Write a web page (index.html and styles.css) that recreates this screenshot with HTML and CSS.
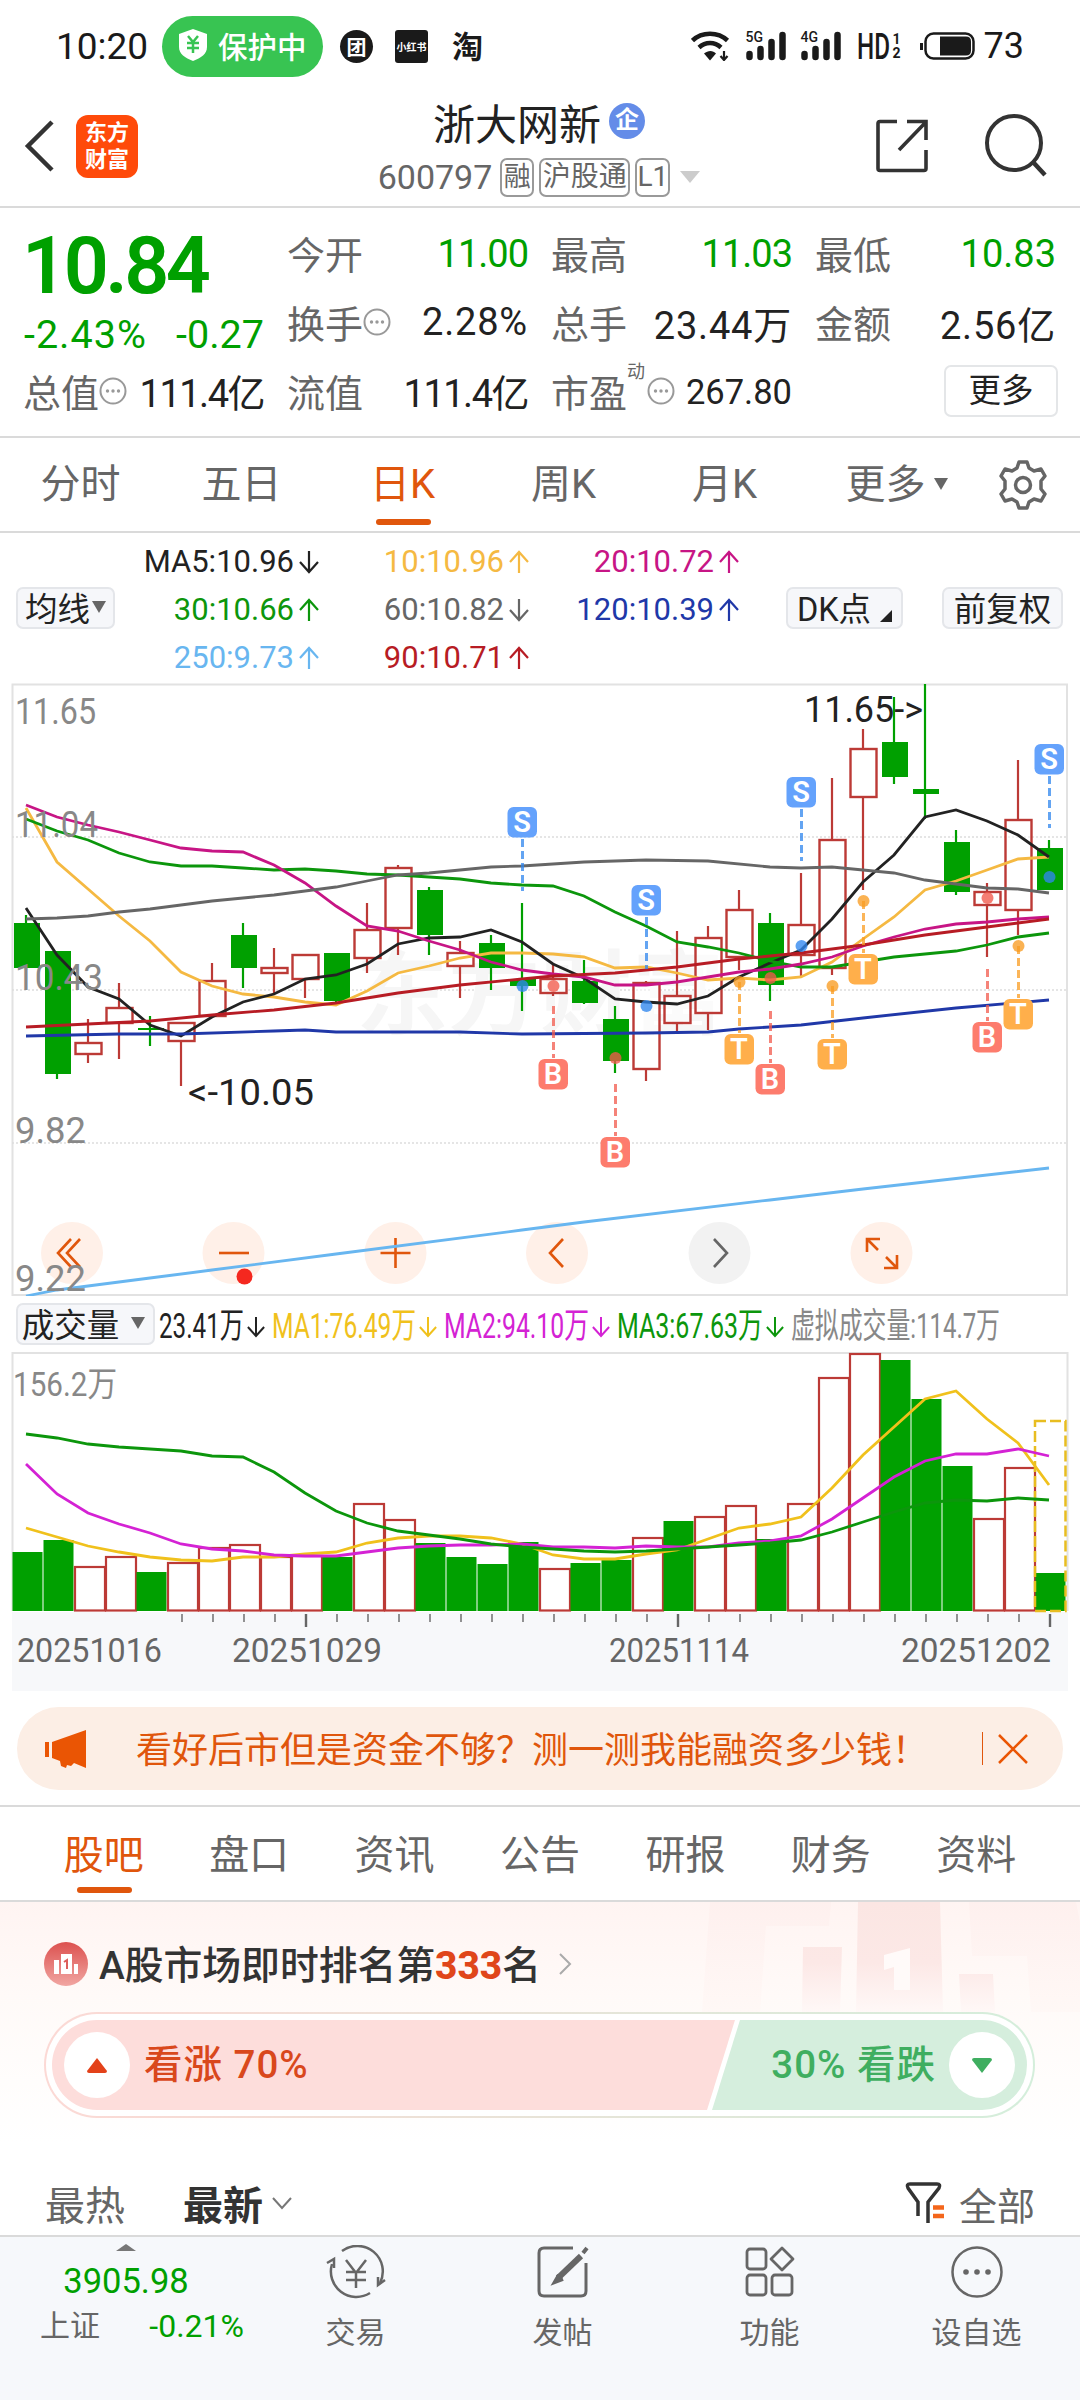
FILE: index.html
```html
<!DOCTYPE html>
<html lang="zh-CN">
<head>
<meta charset="utf-8">
<title>浙大网新 600797</title>
<link rel="stylesheet" href="styles.css">
</head>
<body>

<svg class="defs" width="0" height="0">
  <symbol id="up" viewBox="0 0 20 24"><path d="M10 23V2M1 12L10 2l9 10" fill="none" stroke="currentColor" stroke-width="2.2"/></symbol>
  <symbol id="down" viewBox="0 0 20 24"><path d="M10 1v21M1 12l9 10 9-10" fill="none" stroke="currentColor" stroke-width="2.2"/></symbol>
  <symbol id="info" viewBox="0 0 28 28"><circle cx="14" cy="14" r="12.5" fill="none" stroke="#999" stroke-width="2"/><g fill="#999"><circle cx="8.5" cy="14" r="1.7"/><circle cx="14" cy="14" r="1.7"/><circle cx="19.5" cy="14" r="1.7"/></g></symbol>
  <symbol id="bars" viewBox="0 0 40 30"><g stroke="#1a1a1a" stroke-width="6.5" stroke-linecap="round"><path d="M3.5 23v3M14.5 18v8M25.5 11v15M36.5 4v22"/></g></symbol>
</svg>

<div class="status">
  <span class="time">10:20</span>
  <span class="protect">
    <svg width="28" height="32" viewBox="0 0 28 32"><path d="M14 0l14 5v13c0 7-6 11-14 14C6 29 0 25 0 18V5z" fill="#fff"/><path d="M9 7l5 6 5-6M14 13v11M8 14h12M8 19h12" fill="none" stroke="#38c452" stroke-width="2.5"/></svg>
    保护中
  </span>
  <span class="app round"><b>团</b></span>
  <span class="app square">小红书</span>
  <span class="app tao">淘</span>
  <div class="status-right">
    <svg class="wifi" width="40" height="30" viewBox="0 0 40 30"><g fill="none" stroke="#1a1a1a" stroke-width="4.5"><path d="M1.5 9.5C11 .5 27 .5 36.5 9.5"/><path d="M8 16.5c6.5-6 15.5-6 22 0"/></g><path d="M13 22.5c4-3.5 9-3.5 12 0l-6 7z" fill="#1a1a1a"/><path d="M33 20v9M29.5 25l3.5 4 3.5-4" fill="none" stroke="#1a1a1a" stroke-width="2.2"/></svg>
    <span class="net"><i>5G</i><svg width="40" height="30"><use href="#bars"/></svg></span>
    <span class="net"><i>4G</i><svg width="40" height="30"><use href="#bars"/></svg></span>
    <svg class="hd" width="33" height="30"><text x="0" y="28" font-size="36" font-weight="500" textLength="33" lengthAdjust="spacingAndGlyphs" fill="#1a1a1a">HD</text></svg>
    <span class="sim"><i>1</i><i>2</i></span>
    <svg class="battery" width="55" height="30" viewBox="0 0 55 30"><rect x="5.5" y="2.5" width="48" height="25" rx="8" fill="none" stroke="#1a1a1a" stroke-width="2.5"/><path d="M1.5 12v7" stroke="#1a1a1a" stroke-width="3"/><path d="M20 5.5h26q5 0 5 5v9q0 5-5 5H20z" fill="#1a1a1a"/></svg>
    <span class="level">73</span>
  </div>
</div>

<div class="header">
  <svg class="back" width="32" height="52" viewBox="0 0 32 52"><path d="M29 2L5 26l24 24" fill="none" stroke="#333" stroke-width="4.5"/></svg>
  <div class="logo">东方<br>财富</div>
  <div class="stock">
    <div class="name">浙大网新<span class="badge">企</span></div>
    <div class="code">600797<span class="tag narrow">融</span><span class="tag">沪股通</span><span class="tag level1">L1</span><i class="tri"></i></div>
  </div>
  <svg class="share" width="52" height="54" viewBox="0 0 52 54"><path d="M21 2.5H4q-2 0-2 2v45q0 2 2 2h44q2 0 2-2V31M31 2.5h19V21M23 31L49 4" fill="none" stroke="#333" stroke-width="3.6"/></svg>
  <svg class="search" width="66" height="66" viewBox="0 0 66 66"><circle cx="31" cy="30" r="27" fill="none" stroke="#333" stroke-width="4"/><path d="M50 49l12 13" stroke="#333" stroke-width="4.5"/></svg>
</div>

<div class="quote">
  <div class="price-box">
    <div class="price">10.84</div>
    <div class="change"><span>-2.43%</span><span>-0.27</span></div>
  </div>
  <div class="cell"><label>今开</label><span class="green one">11.00</span></div>
  <div class="cell"><label>最高</label><span class="green one">11.03</span></div>
  <div class="cell"><label>最低</label><span class="green">10.83</span></div>
  <div class="cell"><label>换手<svg class="info"><use href="#info"/></svg></label><span class="wide">2.28%</span></div>
  <div class="cell"><label>总手</label><span class="wide">23.44万</span></div>
  <div class="cell"><label>金额</label><span class="wide">2.56亿</span></div>
  <div class="cell"><label>总值<svg class="info"><use href="#info"/></svg></label><span class="ones">111.4亿</span></div>
  <div class="cell"><label>流值</label><span class="ones">111.4亿</span></div>
  <div class="cell"><label>市盈<sup>动</sup><svg class="info pe"><use href="#info"/></svg></label><span class="small">267.80</span></div>
  <div class="cell end"><button class="more">更多</button></div>
</div>

<div class="periods">
  <span>分时</span>
  <span>五日</span>
  <span class="active">日K</span>
  <span>周K</span>
  <span>月K</span>
  <span class="more-tab">更多<i class="tri"></i></span>
  <svg class="gear" width="50" height="50" viewBox="0 0 50 50"><path d="M21 2h8l2 6 5 3 7-2 4 7-4 5v8l4 5-4 7-7-2-5 3-2 6h-8l-2-6-5-3-7 2-4-7 4-5v-8l-4-5 4-7 7 2 5-3z" fill="none" stroke="#666" stroke-width="3.5" stroke-linejoin="round"/><circle cx="25" cy="25" r="7.5" fill="none" stroke="#666" stroke-width="3.5"/></svg>
</div>

<div class="legend">
  <button class="pill">均线<i class="tri"></i></button>
  <div class="ma">
    <span class="c-dark">MA5:10.96<svg><use href="#down"/></svg></span>
    <span class="c-yellow">10:10.96<svg><use href="#up"/></svg></span>
    <span class="c-pink">20:10.72<svg><use href="#up"/></svg></span>
    <span class="c-green">30:10.66<svg><use href="#up"/></svg></span>
    <span class="c-gray">60:10.82<svg><use href="#down"/></svg></span>
    <span class="c-blue">120:10.39<svg><use href="#up"/></svg></span>
    <span class="c-sky">250:9.73<svg><use href="#up"/></svg></span>
    <span class="c-red">90:10.71<svg><use href="#up"/></svg></span>
  </div>
  <button class="pill dk">DK点<i class="corner"></i></button>
  <button class="pill">前复权</button>
</div>

<svg id="kline" class="chart" width="1080" height="613" viewBox="0 683 1080 613"></svg>

<div class="vol-head">
  <button class="pill">成交量<i class="tri"></i></button>
  <svg width="880" height="56" viewBox="158 0 880 56" font-size="35">
    <g fill="#222"><text x="159" y="42" textLength="85" lengthAdjust="spacingAndGlyphs">23.41万</text><use href="#down" x="247" y="19" width="18" height="24"/></g>
    <g fill="#f0c11c" color="#f0c11c"><text x="272" y="42" textLength="144" lengthAdjust="spacingAndGlyphs">MA1:76.49万</text><use href="#down" x="419" y="19" width="18" height="24"/></g>
    <g fill="#d422d4" color="#d422d4"><text x="444" y="42" textLength="145" lengthAdjust="spacingAndGlyphs">MA2:94.10万</text><use href="#down" x="592" y="19" width="18" height="24"/></g>
    <g fill="#0c960c" color="#0c960c"><text x="617" y="42" textLength="146" lengthAdjust="spacingAndGlyphs">MA3:67.63万</text><use href="#down" x="766" y="19" width="18" height="24"/></g>
    <text x="791" y="42" fill="#888" textLength="209" lengthAdjust="spacingAndGlyphs">虚拟成交量:114.7万</text>
  </svg>
</div>

<svg id="volume" class="chart" width="1080" height="339" viewBox="0 1352 1080 339"></svg>

<div class="banner">
  <svg width="44" height="38" viewBox="0 0 44 38"><path d="M1 12h4v15H1zM8 12L42 0v38l-12-5-3 3-4-1-1 3-5-2-1-5-8-3z" fill="#ea5504"/></svg>
  <span>看好后市但是资金不够？测一测我能融资多少钱！</span>
  <i></i>
  <svg class="close" width="30" height="30" viewBox="0 0 30 30"><path d="M1 1l28 28M29 1L1 29" stroke="#ea5504" stroke-width="2.5"/></svg>
</div>

<div class="tabs">
  <span class="active">股吧</span>
  <span>盘口</span>
  <span>资讯</span>
  <span>公告</span>
  <span>研报</span>
  <span>财务</span>
  <span>资料</span>
</div>

<div class="rank">
  <svg class="podium" width="380" height="110" viewBox="0 0 380 110">
    <defs>
      <linearGradient id="fade" x1="0" y1="0" x2="0" y2="110" gradientUnits="userSpaceOnUse"><stop offset="0" stop-color="#fbe6e3"/><stop offset=".55" stop-color="#fce8e6"/><stop offset="1" stop-color="#fff8f7"/></linearGradient>
      <linearGradient id="fade2" x1="0" y1="0" x2="0" y2="110" gradientUnits="userSpaceOnUse"><stop offset="0" stop-color="#fef0ee"/><stop offset="1" stop-color="#fff8f6"/></linearGradient>
    </defs>
    <path d="M10 0h121l-2 24H66l-6 86H2zM269 0h107l4 20v90h-49l-4-56h-55z" fill="url(#fade2)"/>
    <path d="M103 45h39l-2 65h-38zM158 0h82l3 110h-87zM259 72h34l2 38h-34z" fill="url(#fade)"/>
    <path d="M184 53l26-7v42h-16V65l-10 3z" fill="#fffaf9"/>
  </svg>
  <div class="rank-title">
    <svg width="44" height="44" viewBox="0 0 44 44"><defs><linearGradient id="rg" x1="0" y1="0" x2="0" y2="1"><stop offset="0" stop-color="#dc514f"/><stop offset="1" stop-color="#f1a6a2"/></linearGradient></defs><circle cx="22" cy="22" r="22" fill="url(#rg)"/><path d="M10 18h5v14h-5zM17 12h11v20H17zM30 22h4v10h-4z" fill="#fff"/><path d="M20 20l3-2v9" stroke="#dd5f5c" stroke-width="2" fill="none"/></svg>
    <span>A股市场即时排名第<b>333</b>名</span>
    <svg class="go" width="14" height="22" viewBox="0 0 14 22"><path d="M2 1l10 10L2 21" fill="none" stroke="#aaa" stroke-width="2"/></svg>
  </div>
  <div class="vote">
    <div class="rise">
      <span class="knob"><svg width="22" height="17" viewBox="0 0 22 17"><path d="M11 1l10 13q0 2-2 2H3q-2 0-2-2z" fill="#e3421a"/></svg></span>
      看涨 70%
    </div>
    <div class="fall">
      30% 看跌
      <span class="knob"><svg width="22" height="17" viewBox="0 0 22 17"><path d="M11 16L1 3q0-2 2-2h16q2 0 2 2z" fill="#3fae60"/></svg></span>
    </div>
  </div>
</div>

<div class="sort">
  <span>最热</span>
  <span class="active">最新</span>
  <svg width="20" height="13" viewBox="0 0 20 13"><path d="M1 1l9 10 9-10" fill="none" stroke="#777" stroke-width="2"/></svg>
  <svg class="filter" width="40" height="44" viewBox="0 0 40 44"><path d="M13 35V21L3 7Q1 3 5 3h27q4 0 2 4L23 21v21" fill="none" stroke="#333" stroke-width="3.5"/><path d="M28 26.5h11M28 35h11" stroke="#f4661b" stroke-width="4.5"/></svg>
  <span>全部</span>
</div>

<div class="bottom">
  <div class="index">
    <i class="tri up"></i>
    <div class="point">3905.98</div>
    <div class="idx-row"><span>上证</span><span class="green">-0.21%</span></div>
  </div>
  <div class="nav">
    <svg width="60" height="54" viewBox="0 0 60 54" fill="none" stroke="#666" stroke-width="2.5"><path d="M16 6A25.5 25.5 0 0 1 54 38M44 48A25.5 25.5 0 0 1 6 19"/><path d="M1 18l7-4v9M59 35l-7 5v-8"/><path d="M20 15l10 13 10-13M30 28v15M20 27h20M20 35h20"/></svg>
    交易
  </div>
  <div class="nav">
    <svg width="52" height="54" viewBox="0 0 52 54" fill="none" stroke="#666" stroke-width="3"><path d="M36 3H7Q2 3 2 8v38q0 5 5 5h37q5 0 5-5V18"/><path d="M44 11L21 33" stroke-width="6"/><path d="M22 30l-4 7 8-3M46 8l4-5" stroke-width="4"/></svg>
    发帖
  </div>
  <div class="nav">
    <svg width="50" height="54" viewBox="0 0 50 54" fill="none" stroke="#666" stroke-width="2.8"><rect x="2" y="4" width="19" height="20" rx="3"/><rect x="2" y="30" width="19" height="20" rx="3"/><rect x="27" y="30" width="20" height="20" rx="3"/><path d="M37 3l11 11-11 11-11-11z" stroke-linejoin="round"/></svg>
    功能
  </div>
  <div class="nav">
    <svg width="54" height="54" viewBox="0 0 54 54"><circle cx="27" cy="27" r="24.5" fill="none" stroke="#666" stroke-width="2.5"/><g fill="#666"><circle cx="16" cy="27" r="2.8"/><circle cx="27" cy="27" r="2.8"/><circle cx="38" cy="27" r="2.8"/></g></svg>
    设自选
  </div>
</div>

<script src="script.js"></script>
</body>
</html>
```
FILE: styles.css
```css
* {
  box-sizing: border-box;
}
body {
  margin: 0;
  width: 1080px;
  background-color: #fff;
  color: #222;
  font-family: Roboto, "Noto Sans CJK SC", sans-serif;
}
i {
  font-style: normal;
}
svg {
  flex-shrink: 0;
}
.defs {
  display: block;
  height: 0;
}
button {
  font-family: inherit;
  color: #222;
}
.green {
  color: #00a000;
}
.tri {
  display: inline-block;
  border: 7px solid transparent;
  border-top: 12px solid #666;
  border-bottom: 0;
}

/* status bar */
.status {
  display: flex;
  align-items: center;
  height: 90px;
  padding: 2px 56px 0;
  color: #1a1a1a;
}
.time {
  width: 106px;
  font-size: 37px;
}
.protect {
  display: flex;
  align-items: center;
  gap: 11px;
  width: 161px;
  height: 61px;
  padding-left: 17px;
  padding-bottom: 2px;
  border-radius: 31px;
  background-color: #38c452;
  color: #fff;
  font-size: 29.5px;
  font-weight: 500;
}
.app {
  display: flex;
  align-items: center;
  justify-content: center;
  width: 33px;
  height: 33px;
  background-color: #1a1a1a;
  color: #fff;
}
.app.round {
  margin-left: 17px;
  border-radius: 50%;
  font-size: 20px;
}
.app.square {
  margin-left: 22px;
  border-radius: 3px;
  font-size: 10px;
  font-weight: bold;
}
.app.tao {
  margin-left: 23px;
  padding-bottom: 3px;
  background: none;
  color: #1a1a1a;
  font-size: 31px;
  font-weight: bold;
}
.status-right {
  display: flex;
  align-items: center;
  margin-left: auto;
}
.net {
  position: relative;
  height: 30px;
  margin-left: 15px;
}
.net i {
  position: absolute;
  left: 0;
  top: -3px;
  font-size: 14px;
  font-weight: 500;
  line-height: 18px;
}
.hd {
  margin-left: 16px;
}
.sim {
  display: flex;
  flex-direction: column;
  font-size: 14px;
  font-weight: bold;
  line-height: 14px;
  width: 9px;
  margin-left: 3px;
  margin-right: 18px;
}
.level {
  margin-left: 9px;
  font-size: 36px;
}

/* stock title */
.header {
  display: flex;
  align-items: center;
  height: 118px;
  padding: 0 31px 0 23px;
  border-bottom: 2px solid #dadada;
}
.back,
.logo,
.share,
.search {
  margin-bottom: 4px;
}
.logo {
  width: 62px;
  height: 63px;
  margin-left: 21px;
  padding-top: 4px;
  border-radius: 12px;
  background-color: #ff4a0a;
  color: #fff;
  font-size: 22px;
  font-weight: bold;
  line-height: 27px;
  text-align: center;
}
.stock {
  width: 400px;
  margin-left: 201px;
  text-align: center;
}
.name {
  display: flex;
  align-items: center;
  justify-content: center;
  height: 56px;
  padding-top: 2px;
  font-size: 42px;
}
.badge {
  width: 36px;
  height: 36px;
  margin-left: 8px;
  border-radius: 50%;
  background-color: #648ce8;
  color: #fff;
  font-size: 24px;
  font-weight: bold;
  line-height: 34px;
}
.code {
  display: flex;
  align-items: center;
  justify-content: center;
  height: 56px;
  padding-top: 2px;
  color: #666;
  font-size: 34px;
}
.tag {
  width: 91px;
  height: 39px;
  margin-left: 5px;
  border: 2px solid #999;
  border-radius: 7px;
  font-size: 28px;
  line-height: 34px;
}
.tag.narrow {
  width: 34px;
  margin-left: 8px;
  font-size: 27px;
}
.tag.level1 {
  width: 35px;
}
.code .tri {
  margin-left: 10px;
  border-width: 12px 10px 0;
  border-top-color: #ccc;
}
.share {
  margin-left: 137px;
}
.search {
  margin-left: auto;
}

/* quote numbers */
.quote {
  display: grid;
  grid-template-columns: repeat(4, 240px);
  grid-template-rows: repeat(3, 69px);
  column-gap: 24px;
  height: 230px;
  padding: 10px 24px 0;
  border-bottom: 2px solid #dadada;
}
.price-box {
  grid-row: span 2;
  padding-top: 2px;
  color: #00a000;
}
.price {
  margin-left: -2px;
  font-size: 79px;
  font-weight: 600;
  line-height: 92px;
  letter-spacing: -3.5px;
}
.change {
  display: flex;
  justify-content: space-between;
  font-size: 39.5px;
  line-height: 46px;
}
.change span:first-child {
  letter-spacing: 1px;
}
.cell {
  display: flex;
  align-items: center;
  justify-content: space-between;
  font-size: 38px;
  white-space: nowrap;
}
.cell label {
  display: flex;
  align-items: center;
  margin-left: -1px;
  color: #666;
}
.cell span {
  padding-top: 3px;
}
.cell .one {
  letter-spacing: -1px;
}
.cell .ones {
  padding-top: 0;
  letter-spacing: -1.5px;
}
.cell .wide {
  padding-top: 1px;
  letter-spacing: 0.8px;
}
.cell .small {
  font-size: 34.5px;
}
.info {
  width: 28px;
  height: 28px;
}
.cell sup {
  align-self: flex-start;
  font-size: 18px;
  line-height: 18px;
}
.cell .pe {
  margin-left: 2px;
}
.cell.end {
  justify-content: flex-end;
}
.more {
  width: 114px;
  height: 52px;
  margin-right: -2px;
  border: 2px solid #e4e6e8;
  border-radius: 7px;
  background-color: #fff;
  font-size: 32.5px;
  line-height: 46px;
}

/* chart periods */
.periods {
  display: flex;
  align-items: center;
  height: 95px;
  border-bottom: 2px solid #dadada;
  color: #666;
  font-size: 40px;
}
.periods span {
  position: relative;
  width: 161px;
  line-height: 98px;
  text-align: center;
}
.periods .more-tab {
  width: 179px;
  margin-left: 2px;
}
.more-tab .tri {
  margin-left: 8px;
  vertical-align: 8px;
}
.gear {
  margin-left: 12px;
}
.periods .active,
.tabs .active {
  color: #e0560c;
}
.periods .active::after,
.tabs .active::after {
  content: "";
  position: absolute;
  left: 50%;
  bottom: 9px;
  width: 55px;
  height: 6px;
  margin-left: -27px;
  border-radius: 3px;
  background-color: #e0560c;
}

/* moving average legend */
.legend {
  display: flex;
  align-items: center;
  height: 150px;
  padding: 0 16px;
}
.pill {
  display: flex;
  align-items: center;
  justify-content: center;
  width: 121px;
  height: 42px;
  padding: 0 0 3px;
  border: 2px solid #e4e6ea;
  border-radius: 7px;
  background-color: #f6f7fa;
  font-size: 32.5px;
  white-space: nowrap;
}
.legend .pill:first-child {
  width: 99px;
}
.legend .pill .tri {
  margin-left: 2px;
}
.ma {
  display: grid;
  grid-template-columns: 204px 210px 210px;
  grid-auto-rows: 48px;
  width: 624px;
  padding-top: 3px;
  font-size: 31px;
}
.ma span {
  display: flex;
  align-items: center;
  justify-content: flex-end;
}
.ma svg {
  width: 20px;
  height: 24px;
  margin-left: 5px;
}
.legend .dk {
  width: 117px;
  margin-left: 47px;
  margin-right: 39px;
}
.corner {
  align-self: flex-end;
  margin: 0 0 2px 9px;
  border-left: 12px solid transparent;
  border-bottom: 12px solid #222;
}
.c-dark { color: #222; }
.c-yellow { color: #f5b942; }
.c-pink { color: #c71585; }
.c-green { color: #0c960c; }
.c-gray { color: #666; }
.c-blue { color: #2038a8; }
.c-sky { color: #68b6f0; }
.c-red { color: #b71c24; }

.chart {
  display: block;
}
.vol-head {
  display: flex;
  align-items: center;
  height: 56px;
  padding-left: 16px;
}
.vol-head .pill {
  width: 139px;
  margin-right: 3px;
  padding-right: 4px;
}
.vol-head .tri {
  margin-left: 12px;
}

/* financing banner */
.banner {
  display: flex;
  align-items: center;
  width: 1046px;
  height: 83px;
  margin: 16px 17px 15px;
  padding-left: 27px;
  border-radius: 42px;
  background-color: #fceee5;
  color: #e0560c;
  font-size: 36px;
}
.banner span {
  width: 846px;
  padding-left: 48px;
  padding-bottom: 3px;
  white-space: nowrap;
}
.banner i {
  width: 1px;
  height: 33px;
  margin-left: 48px;
  background-color: #e0560c;
}
.banner .close {
  margin-left: 15px;
}

.tabs {
  display: flex;
  height: 97px;
  padding: 0 31px;
  border-top: 2px solid #dadada;
  border-bottom: 2px solid #dadada;
  color: #666;
  font-size: 40px;
}
.tabs span {
  position: relative;
  flex: 1;
  line-height: 97px;
  text-align: center;
}
.tabs .active::after {
  bottom: 7px;
}

/* rank and vote */
.rank {
  position: relative;
  height: 268px;
  padding: 40px 44px 0;
  background: linear-gradient(#fff4f2, #fffaf8 35%, #fff 90%);
}
.podium {
  position: absolute;
  right: 0;
  top: 0;
}
.rank-title {
  position: relative;
  display: flex;
  align-items: center;
  height: 44px;
  font-size: 38.8px;
  font-weight: 500;
  color: #333;
}
.rank-title span {
  margin: 0 17px 0 11px;
  padding-bottom: 4px;
}
.rank-title b {
  color: #e0461a;
  font-weight: 800;
}
.vote {
  position: relative;
  display: flex;
  justify-content: space-between;
  width: 991px;
  height: 106px;
  margin-top: 26px;
  padding: 6px;
  border: 2px solid transparent;
  border-radius: 53px;
  background: linear-gradient(#fff, #fff) padding-box, linear-gradient(90deg, #fcd9d5, #d4eedb) border-box;
  font-size: 38.5px;
  font-weight: 500;
  letter-spacing: 1px;
  line-height: 84px;
}
.rise,
.fall {
  display: flex;
  align-items: center;
  height: 90px;
}
.rise {
  width: 683px;
  padding-left: 12px;
  border-radius: 45px 0 0 45px;
  background-color: #fddddb;
  color: #d9481c;
  clip-path: polygon(0 0, 100% 0, 655px 100%, 0 100%);
  gap: 14px;
}
.fall {
  width: 315px;
  margin-left: -23px;
  padding-right: 12px;
  justify-content: flex-end;
  border-radius: 0 45px 45px 0;
  background-color: #d5eedd;
  color: #3fae60;
  clip-path: polygon(28px 0, 100% 0, 100% 100%, 0 100%);
  gap: 13px;
}
.knob {
  display: flex;
  align-items: center;
  justify-content: center;
  width: 66px;
  height: 66px;
  border-radius: 50%;
  background-color: #fff;
}

.sort {
  display: flex;
  align-items: center;
  height: 65px;
  padding: 1px 45px 0;
  color: #666;
  font-size: 40px;
}
.sort .active {
  margin: 0 9px 0 58px;
  color: #333;
  font-weight: bold;
}
.sort .filter {
  margin-left: auto;
  margin-right: 14px;
}
.sort span:last-child {
  font-size: 38px;
}

/* bottom navigation */
.bottom {
  display: flex;
  height: 165px;
  border-top: 2px solid #dadada;
  background-color: #f6f8fb;
  color: #666;
  font-size: 30px;
}
.index {
  display: flex;
  flex-direction: column;
  align-items: center;
  width: 252px;
  padding-top: 7px;
}
.index .tri.up {
  border-width: 0 10px 7px;
  border-bottom: 7px solid #777;
}
.point {
  margin-top: 8px;
  color: #00a000;
  font-size: 34.5px;
  line-height: 44px;
}
.idx-row {
  display: flex;
  justify-content: space-between;
  width: 204px;
  margin-left: 32px;
  padding-top: 1px;
  line-height: 44px;
}
.idx-row .green {
  font-size: 32px;
}
.nav {
  display: flex;
  flex-direction: column;
  align-items: center;
  width: 207px;
  padding-top: 8px;
  line-height: 44px;
}
.nav svg {
  margin-bottom: 12px;
}
```
FILE: script.js
```js
const RED = '#bc3a36';
const GREEN = '#00a000';
const STEP = 31;
const cx = i => 26 + i * STEP;

// [rising, body top, body bottom, wick top, wick bottom]
const candles = [
  [0, 923, 968, 915, 970], [0, 951, 1074, 951, 1079], [1, 1043, 1054, 1019, 1063],
  [1, 1008, 1023, 983, 1059], [0, 1028, 1030, 1016, 1046], [1, 1023, 1041, 1023, 1086],
  [1, 981, 1016, 963, 1016], [0, 935, 968, 923, 988], [1, 968, 973, 948, 994],
  [1, 955, 979, 955, 998], [0, 953, 1001, 953, 1003], [1, 930, 958, 903, 973],
  [1, 868, 928, 865, 955], [0, 890, 935, 887, 955], [1, 953, 966, 941, 998],
  [0, 943, 968, 935, 990], [0, 979, 986, 903, 1011], [1, 979, 993, 964, 996],
  [0, 981, 1003, 960, 1004], [0, 1019, 1061, 1006, 1073], [1, 983, 1069, 981, 1081],
  [1, 996, 1023, 931, 1031], [1, 938, 1013, 926, 1030], [1, 910, 957, 890, 970],
  [0, 923, 985, 913, 1001], [1, 925, 955, 873, 976], [1, 840, 968, 778, 975],
  [1, 749, 797, 729, 890], [0, 742, 777, 697, 784], [0, 789, 794, 684, 819],
  [0, 842, 892, 830, 895], [1, 892, 905, 883, 957], [1, 820, 910, 760, 935],
  [0, 848, 890, 840, 890]
];

// moving averages, null where the line is straight between neighbours
const _ = null;
const averages = [
  ['#f5b942', [808, 862, 889, 916, 941, 972, 986, 994, 997, 1002, 1005, 991, 973, 966, 958, 953, 953, 954, 957, 968, 967, 973, 980, 978, 980, 977, 962, 939, 917, 890, 881, 870, 859, 857]],
  ['#222', [908, 955, 987, 999, 1025, 1036, 1017, 1002, 994, 979, 975, 964, 944, 938, 937, 930, 942, 964, 978, 999, 1002, 1004, 996, 977, 963, 950, 919, 882, 855, 817, 810, 821, 835, 857]],
  ['#0c960c', [819, 831, 840, 853, 862, 866, 866, 868, 870, 869, 871, 874, 875, 877, 879, 883, 885, 886, 896, 912, 926, 942, 947, 953, 961, 967, 967, 962, 957, 954, 951, 945, 937, 933]],
  ['#c71585', [805, 817, 825, 832, 840, 848, 851, 852, 865, 883, 906, 926, 931, 941, 950, 962, 970, 974, 977, 985, 985, 982, 977, 972, 969, 964, 957, 946, 937, 929, 924, 922, 919, 917]],
  ['#666', [919, 918, 916, 912, 909, 905, 901, 898, 895, 891, 887, 881, 875, 873, 870, 867, 866, 864, 862, _, 860, _, 861, _, 867, 868, 867, 870, 873, 880, 884, 888, 889, 893]],
  ['#2038a8', [1036, _, _, 1034, _, 1034, _, _, 1031, 1030, 1032, _, _, _, 1032, _, 1034, _, _, _, 1033, _, 1032, 1029, _, 1025, _, 1018, _, _, 1008, _, _, 1000]],
  ['#b71c24', [1027, _, 1024, _, 1021, _, 1015, _, 1010, _, 1003, _, 993, _, 985, _, 979, 976, _, 973, _, 967, _, 959, 956, 953, _, 945, _, 935, _, 927, _, 919]],
  ['#68b6f0', [1296, 1290, _, _, 1278, _, 1270, _, _, _, 1254, _, _, _, _, _, 1230, _, 1222, _, _, _, _, _, 1200, _, _, 1189, _, _, _, _, _, 1168]]
];

// [letter, index, badge top, line start, line end, dot]
const signals = [
  ['S', 16, 807, 839, 891, 986], ['S', 20, 885, 917, 969, 1006], ['S', 25, 777, 809, 861, 946], ['S', 33, 744, 776, 828, 877],
  ['B', 17, 1059, 1006, 1058, 986], ['B', 19, 1137, 1084, 1136, 1058], ['B', 24, 1064, 1011, 1063, 978], ['B', 31, 1022, 969, 1021, 898],
  ['T', 23, 1034, 982, 1033, 982], ['T', 26, 1039, 986, 1038, 986], ['T', 27, 954, 901, 953, 901], ['T', 32, 999, 946, 998, 946]
];
const signalColors = {
  S: ['#64a2fc', '#2f86ee'],
  B: ['#fd7c6d', '#f25a4c'],
  T: ['#ffaf4b', '#f99c22']
};

function line(values, color, w) {
  const pts = values.map((y, i) => y === null ? '' : `${cx(i)},${y}`).filter(Boolean).join(' ');
  return `<polyline points="${pts}" fill="none" stroke="${color}" stroke-width="${w}"/>`;
}
function label(x, y, w, text, color = '#888', size = 36) {
  return `<text x="${x}" y="${y}" textLength="${w}" lengthAdjust="spacingAndGlyphs" font-size="${size}" fill="${color}">${text}</text>`;
}

let k = '<rect x="12.5" y="684.5" width="1054.5" height="610.5" fill="none" stroke="#e2e2e2" stroke-width="2"/>';
[837, 990, 1143].forEach(y => {
  k += `<path d="M12 ${y}H1067" stroke="#ddd" stroke-width="1.5" stroke-dasharray="2 2"/>`;
});
k += '<text x="356" y="1027" font-size="92" font-weight="bold" fill="#f6f6f6" textLength="368">东方财富</text>';

candles.forEach(([rise, t, b, wt, wb], i) => {
  const x = cx(i);
  if (rise) {
    k += `<path d="M${x} ${wt}V${t}M${x} ${b}V${wb}" stroke="${RED}" stroke-width="2.2"/>`;
    k += `<rect x="${x - 12.5}" y="${t}" width="26" height="${b - t}" fill="#fff" fill-opacity=".5" stroke="${RED}" stroke-width="2.4"/>`;
  } else {
    k += `<path d="M${x} ${wt}V${wb}" stroke="${GREEN}" stroke-width="2.2"/>`;
    k += `<rect x="${x - 12}" y="${t}" width="26" height="${b - t}" fill="${GREEN}"/>`;
  }
});

// zoom and scroll buttons
const buttons = [
  [72, 'M71 1239l-13 14 13 14M80 1239l-13 14 13 14'],
  [233.5, 'M219 1253h30'],
  [395.5, 'M380.5 1253h30M395.5 1238v30'],
  [557, 'M563 1239l-13 14 13 14'],
  [719.5, 'M714 1239l13 14-13 14'],
  [881.5, 'M867 1252v-13h13M867 1239l11 11M897 1255v13h-13M897 1268l-11-11']
];
buttons.forEach(([x, d], i) => {
  const gray = i === 4;
  k += `<circle cx="${x}" cy="1253" r="31" fill="${gray ? '#f2f2f2' : '#fff0e8'}"/>`;
  k += `<path d="${d}" fill="none" stroke="${gray ? '#666' : '#e0560c'}" stroke-width="2.6"/>`;
});

averages.forEach(([color, values]) => k += line(values, color, 2.8));
k += '<circle cx="244.5" cy="1276.5" r="8" fill="#f5281f"/>';

signals.forEach(([s, i, top, from, to, dot]) => {
  const x = cx(i) + 0.5;
  const [fill, dark] = signalColors[s];
  k += `<path d="M${x} ${from}V${to}" stroke="${dark}" stroke-opacity=".75" stroke-width="3" stroke-dasharray="8 4"/>`;
  k += `<circle cx="${x}" cy="${dot}" r="6" fill="${dark}" fill-opacity=".78"/>`;
  k += `<rect x="${x - 15}" y="${top}" width="29.5" height="30.5" rx="6" fill="${fill}"/>`;
  k += `<text x="${x - 0.5}" y="${top + 25}" font-size="29" font-weight="600" text-anchor="middle" fill="#fff">${s}</text>`;
});

k += label(15, 724, 81, '11.65') + label(15, 837, 83, '11.04') + label(15, 990, 88, '10.43');
k += label(15, 1143, 71, '9.82') + label(15, 1291, 71, '9.22');
k += label(188, 1105, 126, '&lt;-10.05', '#222') + label(804, 722, 119, '11.65-&gt;', '#222');
document.getElementById('kline').innerHTML = k;

// [rising, top]
const volumes = [
  [0, 1552], [0, 1540], [1, 1567], [1, 1557], [0, 1572], [1, 1563], [1, 1548], [1, 1545], [1, 1557],
  [1, 1556], [0, 1557], [1, 1504], [1, 1520], [0, 1543], [0, 1557], [0, 1564], [0, 1542], [1, 1569],
  [0, 1563], [0, 1560], [1, 1538], [0, 1521], [1, 1517], [1, 1506], [0, 1539], [1, 1504], [1, 1378],
  [1, 1354], [0, 1360], [0, 1399], [0, 1466], [1, 1519], [1, 1468], [0, 1573]
];
const volumeLines = [
  ['#f0c11c', [1528, 1537, 1546, 1552, 1557, 1560, 1561, 1557, 1557, 1554, 1552, 1543, 1538, 1536, 1536, 1538, 1544, 1555, 1559, 1559, 1554, 1550, 1539, 1528, 1524, 1517, 1488, 1455, 1427, 1399, 1391, 1419, 1443, 1485]],
  ['#d422d4', [1464, 1494, 1513, 1524, 1533, 1544, 1549, 1551, 1555, 1556, 1556, 1552, 1548, 1546, 1545, 1545, 1544, 1547, 1547, 1548, 1546, 1547, 1547, 1543, 1541, 1536, 1519, 1498, 1477, 1461, 1454, 1454, 1449, 1456]],
  ['#0c960c', [1434, 1438, 1444, 1447, 1449, 1451, 1456, 1457, 1472, 1493, 1511, 1523, 1531, 1535, 1539, 1544, 1547, 1549, 1551, 1552, 1551, 1549, 1547, 1545, 1543, 1540, 1532, 1522, 1512, 1503, 1500, 1501, 1498, 1500]]
];

let v = '<rect x="12" y="1612" width="1056" height="79" fill="#f7f8fa"/>';
v += '<path d="M12.5 1611V1353H1067.5V1611" fill="none" stroke="#e2e2e2" stroke-width="2"/>';
volumes.forEach(([rise, t], i) => {
  const x = 13 + i * STEP;
  if (rise) {
    v += `<rect x="${x}" y="${t}" width="30" height="${1610.5 - t}" fill="#fff" stroke="${RED}" stroke-width="2.2"/>`;
  } else {
    v += `<rect x="${x - 0.5}" y="${t}" width="30" height="${1611 - t}" fill="${GREEN}"/>`;
  }
});
v += '<rect x="1035" y="1421" width="30.5" height="190" fill="none" stroke="#e8bd20" stroke-width="2.5" stroke-dasharray="11 4"/>';
volumeLines.forEach(([color, values]) => v += line(values, color, 2.8));
for (let i = 5; i < 34; i++) {
  const major = (i - 9) % 12 === 0;
  v += `<path d="M${cx(i) + 1} 1614V${major ? 1627 : 1622}" stroke="#666" stroke-width="${major ? 2.4 : 1.4}"/>`;
}
v += label(17, 1662, 145, '20251016', '#666', 34) + label(232, 1662, 150, '20251029', '#666', 34);
v += label(609, 1662, 140, '20251114', '#666', 34) + label(901, 1662, 150, '20251202', '#666', 34);
v += label(13, 1396, 104, '156.2万', '#888', 34);
document.getElementById('volume').innerHTML = v;
```
